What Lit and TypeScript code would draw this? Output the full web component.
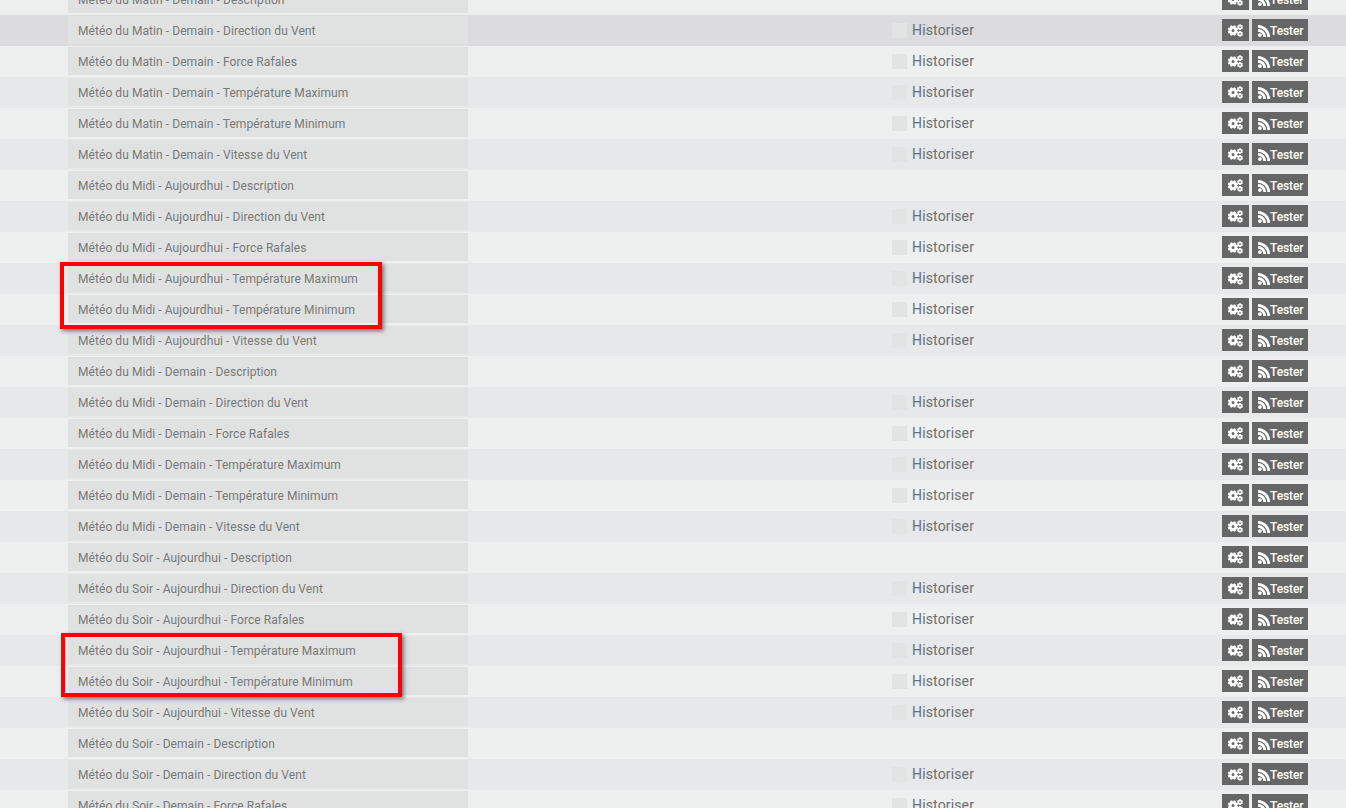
import { LitElement, html, css, svg } from "lit";
import { customElement } from "lit/decorators.js";

type Row = { label: string; history: boolean };

const FIELDS = [
  "Description",
  "Direction du Vent",
  "Force Rafales",
  "Température Maximum",
  "Température Minimum",
  "Vitesse du Vent",
];

const GROUPS = [
  "Météo du Matin - Demain",
  "Météo du Midi - Aujourdhui",
  "Météo du Midi - Demain",
  "Météo du Soir - Aujourdhui",
  "Météo du Soir - Demain",
];

const ROWS: Row[] = GROUPS.flatMap((g) =>
  FIELDS.map((f) => ({ label: `${g} - ${f}`, history: f !== "Description" }))
).slice(0, 27);

// builds a gear outline, the hole is cut with fill-rule evenodd
function gear(cx: number, cy: number, outer: number, inner: number, hole: number, teeth: number) {
  let d = "";
  const step = (Math.PI * 2) / teeth;
  for (let i = 0; i < teeth; i++) {
    const a = i * step + step / 2;
    const pts: [number, number][] = [
      [inner, a - step * 0.38],
      [outer, a - step * 0.24],
      [outer, a + step * 0.24],
      [inner, a + step * 0.38],
    ];
    for (const [r, t] of pts) {
      d += `${d ? "L" : "M"}${(cx + r * Math.cos(t)).toFixed(2)} ${(cy + r * Math.sin(t)).toFixed(2)}`;
    }
  }
  d += "Z";
  d += `M${cx - hole} ${cy}a${hole} ${hole} 0 1 0 ${hole * 2} 0a${hole} ${hole} 0 1 0 ${-hole * 2} 0Z`;
  return d;
}

const cogsIcon = svg`<path fill-rule="evenodd" d="${gear(6, 6.5, 5.3, 4.3, 1.5, 8)}" /><path fill-rule="evenodd" d="${gear(13, 3.2, 3, 2.4, 0.85, 6)}" /><path fill-rule="evenodd" d="${gear(13, 9.8, 3, 2.4, 0.85, 6)}" />`;

const rssIcon = svg`
  <circle cx="1.9" cy="10.1" r="1.9" />
  <path d="M0 4v2.7a5.3 5.3 0 0 1 5.3 5.3H8A8 8 0 0 0 0 4Z" />
  <path d="M0 0v2.7A9.3 9.3 0 0 1 9.3 12H12A12 12 0 0 0 0 0Z" />
`;

@customElement("app-root")
export class AppRoot extends LitElement {
  static styles = css`
    :host {
      display: block;
      height: 808px;
      overflow: hidden;
      position: relative;
      background: #eef0ef;
      font-family: Roboto, sans-serif;
    }

    .list {
      margin-top: -16px;
    }

    .row {
      display: flex;
      align-items: flex-start;
      height: 31px;
      box-sizing: border-box;
      padding: 1px 38px 0 68px;
      background: #eef0ef;
    }

    .row:nth-child(even) {
      background: #e7e8e9;
    }

    .row.hover {
      background: #dcdcde;
    }

    .name {
      width: 400px;
      height: 28px;
      line-height: 30px;
      box-sizing: border-box;
      padding-left: 10px;
      background: #e0e2e1;
      color: #77797a;
      font-size: 12px;
      letter-spacing: 0.07px;
      flex: none;
    }

    .history {
      display: flex;
      align-items: center;
      gap: 5px;
      height: 28px;
      margin-left: 424px;
      color: #6b6e72;
      font-size: 14px;
      letter-spacing: 0.15px;
    }

    .box {
      width: 15px;
      height: 15px;
      background: #e2e4e3;
    }

    .actions {
      display: flex;
      gap: 3px;
      margin-left: auto;
      margin-top: 3px;
    }

    .btn {
      display: flex;
      align-items: center;
      height: 22px;
      background: #666666;
      color: #ffffff;
      font-size: 12px;
      font-weight: 500;
      box-sizing: border-box;
    }

    .btn svg {
      fill: #ffffff;
      display: block;
      flex: none;
    }

    .cfg {
      width: 27px;
      padding-left: 5px;
    }

    .cfg svg {
      margin-top: 1px;
    }

    .test {
      width: 56px;
      padding-left: 6px;
    }

    .test svg {
      margin-top: 1px;
    }

    .test span {
      margin-top: 2px;
      letter-spacing: -0.1px;
    }

    .mark {
      position: absolute;
      box-sizing: border-box;
      border: 4px solid #ff0000;
      box-shadow: 2px 2px 4px rgba(60, 60, 60, 0.65);
    }

    .mark.one {
      left: 60px;
      top: 262px;
      width: 322px;
      height: 67px;
    }

    .mark.two {
      left: 61px;
      top: 633px;
      width: 341px;
      height: 64px;
    }
  `;

  render() {
    return html`
      <div class="list">
        ${ROWS.map(
          (r, i) => html`
            <div class="row ${i === 1 ? "hover" : ""}">
              <div class="name">${r.label}</div>
              ${r.history
                ? html`<div class="history"><span class="box"></span>Historiser</div>`
                : ""}
              <div class="actions">
                <div class="btn cfg">
                  <svg width="17" height="13" viewBox="0 0 17 13">${cogsIcon}</svg>
                </div>
                <div class="btn test">
                  <svg width="12" height="12" viewBox="0 0 12 12">${rssIcon}</svg>
                  <span>Tester</span>
                </div>
              </div>
            </div>
          `
        )}
      </div>
      <div class="mark one"></div>
      <div class="mark two"></div>
    `;
  }
}
